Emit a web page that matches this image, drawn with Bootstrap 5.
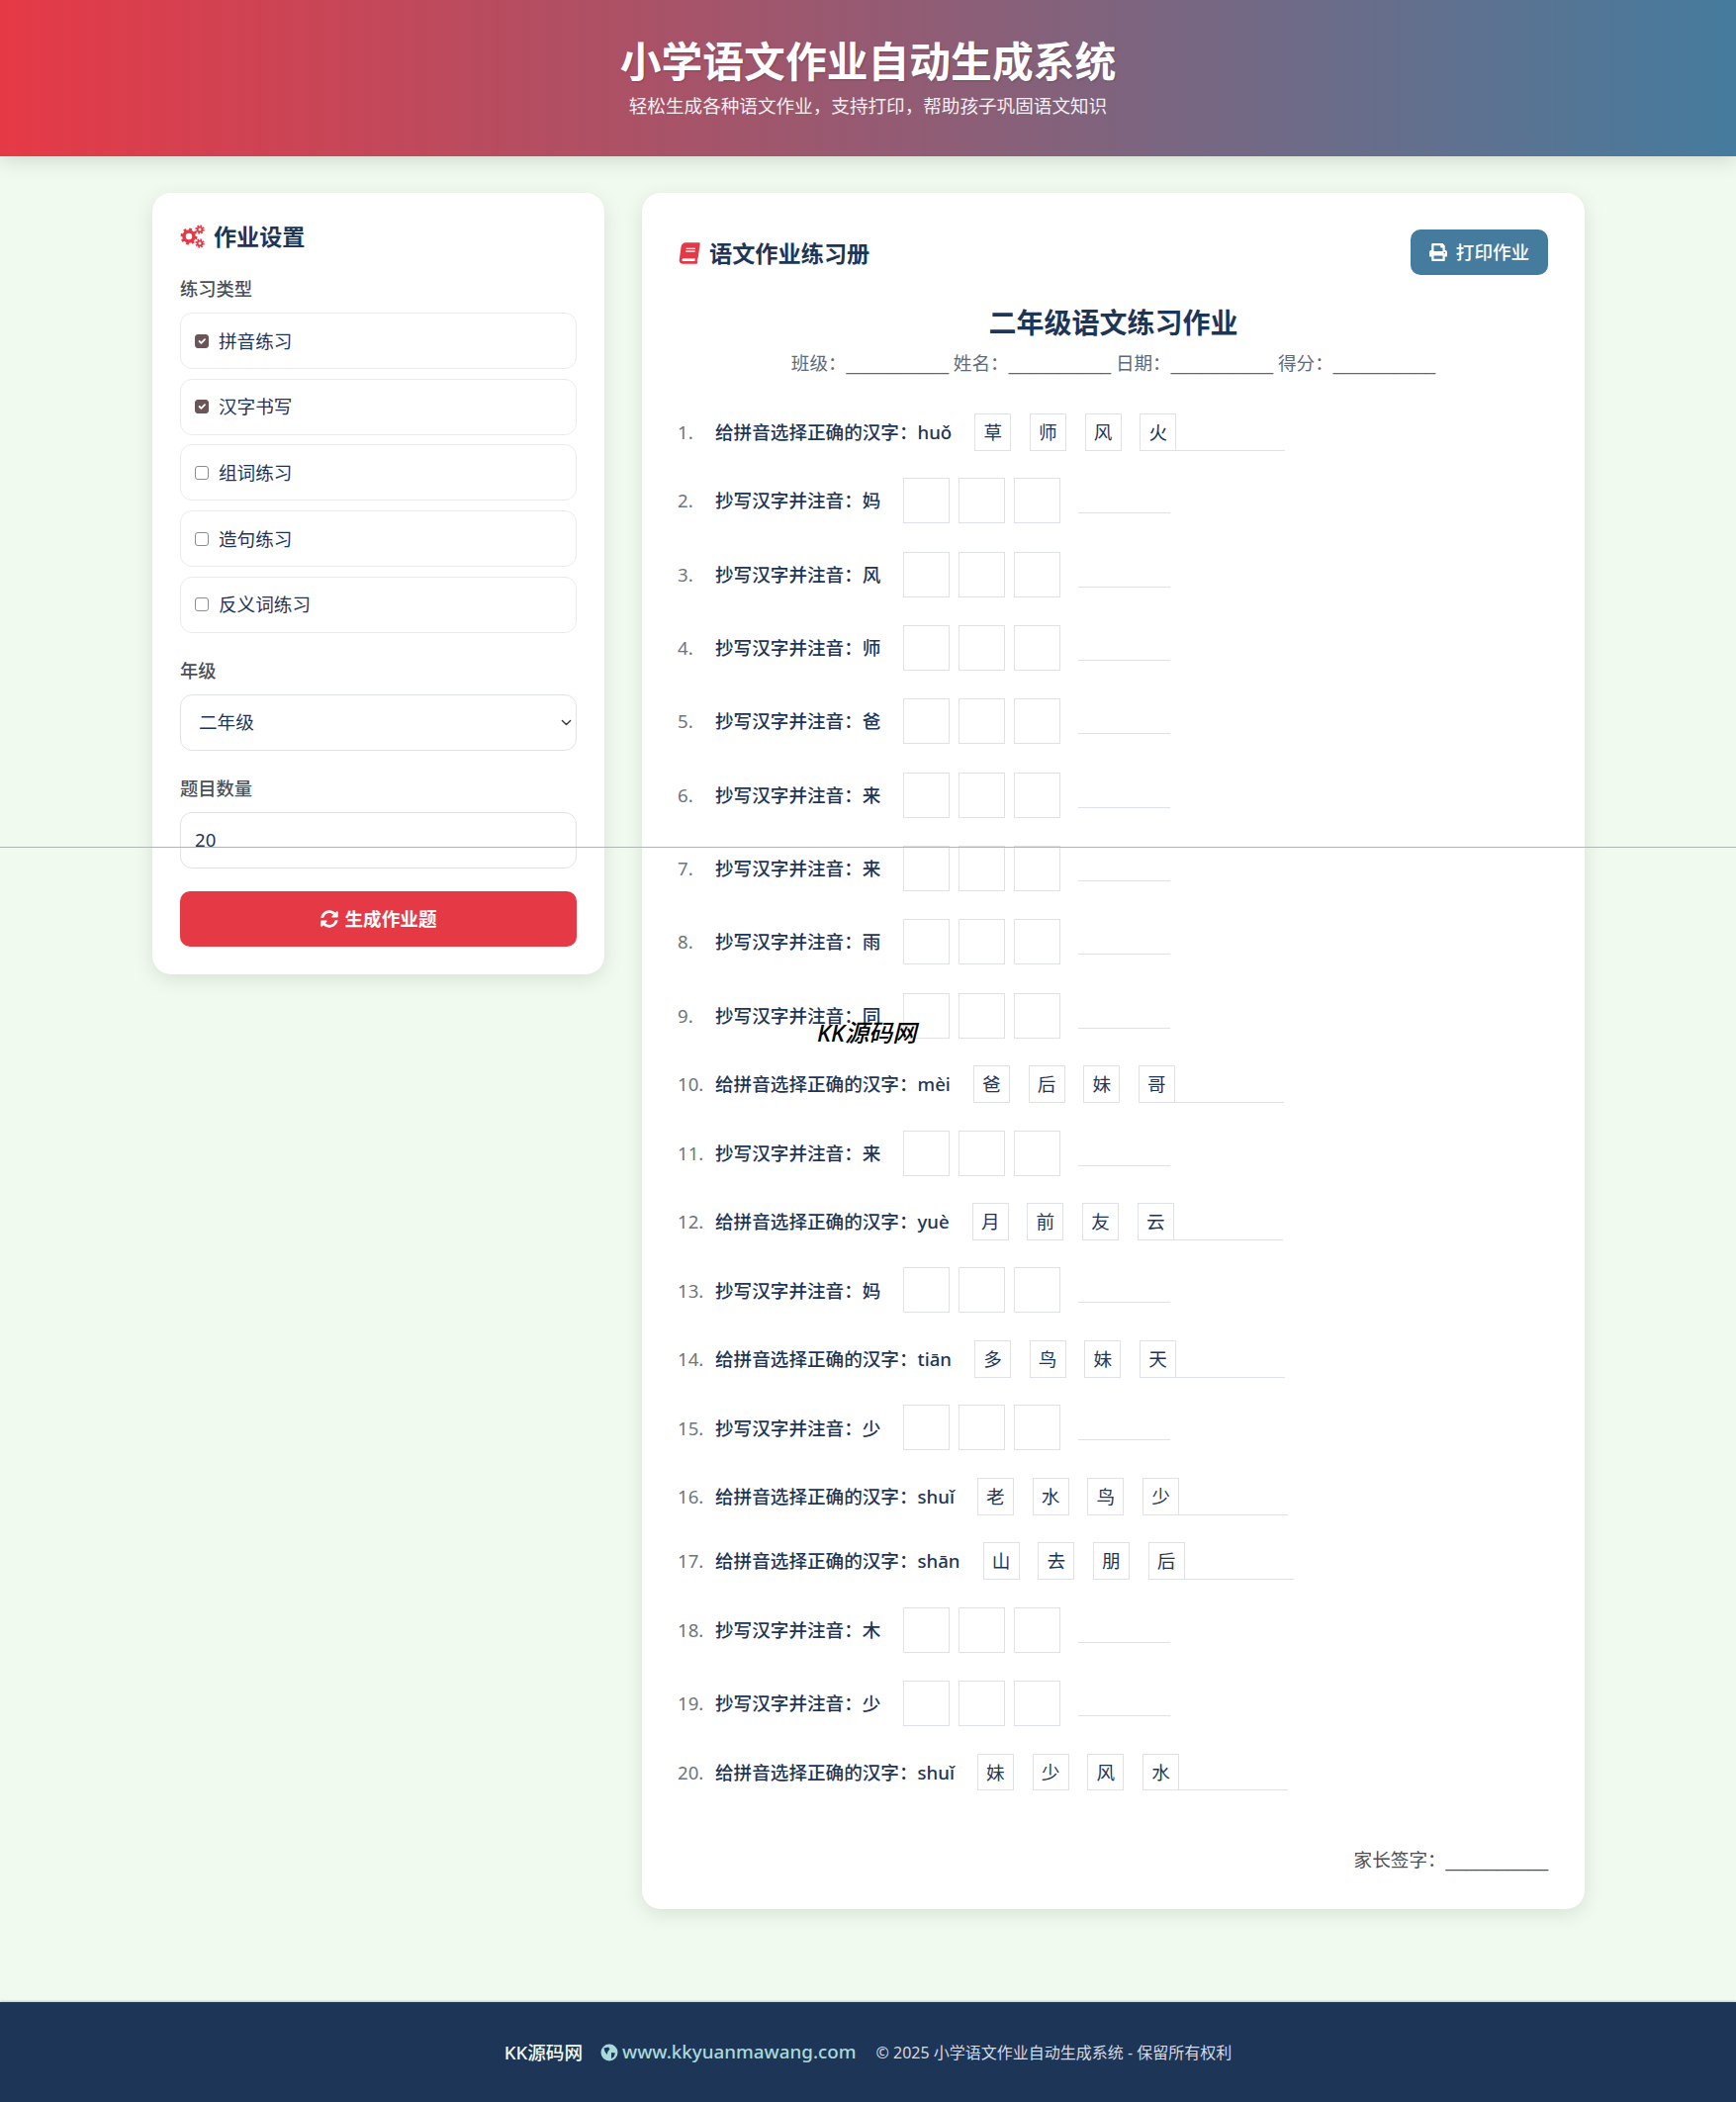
<!DOCTYPE html>
<html lang="zh-CN">
<head>
<meta charset="utf-8">
<title>小学语文作业自动生成系统</title>
<link rel="stylesheet" href="https://cdn.jsdelivr.net/npm/bootstrap@5.3.0/dist/css/bootstrap.min.css">
<style>
:root{--ink:#1d3557;--red:#e63946;--blue:#457b9d;}
html,body{margin:0;}
body{background:#f1faee;color:var(--ink);font-family:"Noto Sans","Noto Sans CJK SC",sans-serif;font-size:18.6px;position:relative;height:2125px;overflow:hidden;}
.top-band{height:158px;background:linear-gradient(90deg,#e63946,#457b9d);box-shadow:0 4px 20px rgba(0,0,0,.14);color:#fff;text-align:center;padding-top:33px;position:relative;}
.top-band h1{font-size:41.8px;font-weight:700;line-height:57px;margin:0;text-shadow:1px 1px 2px rgba(0,0,0,.2);}
.top-band p{font-size:18.6px;line-height:26px;margin:4px 0 0;opacity:.9;}
.page-body{width:1448px;margin:37px 0 0 154px;gap:38px;align-items:flex-start;}
.panel{background:#fff;border:0;border-radius:19px;box-shadow:0 5px 20px rgba(0,0,0,.1);}
.panel-side{width:457px;padding:27px 28px 28px;}
.panel-main{width:953px;height:1735px;padding:37px;}
.side-title{font-size:23.1px;font-weight:700;line-height:34px;margin:0 0 23px;display:flex;align-items:center;gap:8px;}
.field-label{font-size:18.3px;font-weight:500;color:#495057;line-height:26px;margin:0 0 11px;display:block;}
.opt-row{height:57px;border:1px solid #e9ecef;border-radius:12px;margin:0 0 9.7px;padding:0 0 0 14px;display:flex;align-items:center;gap:10px;color:var(--ink);min-height:0;font-size:18.6px;flex:none;}
.opt-row .form-check-input{float:none;margin:0;width:14px;height:14px;border:1.5px solid #8b8f94;border-radius:3px;flex:none;opacity:1;}
.opt-row .form-check-input:checked{background-color:#6b5558;border-color:#6b5558;}
.group-gap-a{margin-top:15.4px;}
.group-gap-b{margin-top:25px;}
.side-input{height:57px;border:1px solid #dfe3e8;border-radius:12px;font-size:18.6px;color:var(--ink);box-shadow:none;flex:none;}
select.side-input{padding-left:18px;background-position:right 3px center;background-size:13px 11px;}
input.side-input{padding-left:14px;padding-top:4px;}
.gen-btn{height:56px;margin-top:23px;background:var(--red);border:0;border-radius:10px;color:#fff;font-size:18.6px;font-weight:700;display:flex;align-items:center;justify-content:center;gap:7px;width:100%;flex:none;}
.gen-btn:hover{background:var(--red);color:#fff;}
.main-title{font-size:23.2px;font-weight:700;line-height:34px;margin:0;display:flex;align-items:center;gap:9px;padding-top:7px;}
.print-btn{background:var(--blue);color:#fff;border:0;border-radius:10px;width:139px;height:46px;font-size:18.6px;font-weight:500;display:flex;align-items:center;justify-content:center;gap:9px;padding:0;}
.print-btn:hover{background:var(--blue);color:#fff;}
.sheet-title{font-size:28px;font-weight:700;line-height:38px;text-align:center;margin:29px 0 0;}
.sheet-meta{color:#5d6a7a;font-size:18.6px;line-height:26px;text-align:center;margin:9px 0 0;}
.blank{font-family:"Liberation Sans",sans-serif;}
.work-list{list-style:none;margin:0;padding:0;position:absolute;top:223.75px;left:36px;right:36px;}
.work-item{display:flex;align-items:center;margin:0 0 28.3px;font-size:18.6px;font-weight:500;}
.work-item:has(.choice-cell){margin-top:-.65px;margin-bottom:27.65px;}
.work-item:has(.choice-cell) + .work-item:has(.choice-cell){margin-top:.65px;}
.item-no{width:38px;color:#6c757d;font-weight:400;flex:none;}
.choice-cell{width:37px;height:37.7px;border:1px solid #dee2e6;display:flex;align-items:center;justify-content:center;font-weight:400;margin-right:18.7px;flex:none;}
.choice-first{margin-left:23px;}
.choice-last{margin-right:0;}
.answer-line{width:110px;height:37.7px;border-bottom:1px solid #dee2e6;flex:none;}
.write-cell{width:47px;height:46px;border:1px solid #dee2e6;margin-right:9px;flex:none;}
.write-first{margin-left:23px;}
.write-line{width:93px;height:26px;border-bottom:1px solid #dee2e6;margin-left:9px;flex:none;}
.sign-line{position:absolute;right:37px;top:1672px;color:#495057;line-height:26px;}
.main-wrap{position:relative;}
.page-foot{position:absolute;left:0;right:0;top:2024px;height:101px;background:#1d3557;color:#d5dbe3;display:flex;align-items:center;justify-content:center;box-shadow:0 -1px 2px rgba(0,0,0,.2);}
.foot-brand{color:#f1faee;font-weight:500;font-size:18.6px;margin-right:18px;}
.foot-link{color:#a8dadc;font-weight:500;font-size:18.8px;display:flex;align-items:center;gap:4px;margin-right:20px;text-decoration:none;}
.foot-copy{font-size:16px;}
.scan-line{position:absolute;left:0;right:0;top:856px;height:1px;background:#b1b5b4;}
.wm{position:absolute;left:826px;top:1027px;font-style:italic;font-size:24.2px;color:#000;line-height:34px;font-weight:500;}
</style>
</head>
<body>
<header class="top-band">
  <h1>小学语文作业自动生成系统</h1>
  <p>轻松生成各种语文作业，支持打印，帮助孩子巩固语文知识</p>
</header>
<main class="d-flex page-body">
  <aside class="card panel panel-side">
    <h3 class="side-title">
      <svg width="26" height="24" viewBox="0 0 26 24" fill="none" stroke="#e63946"><circle cx="9" cy="12" r="5" stroke-width="3.6"/><circle cx="9" cy="12" r="7.2" stroke-width="2.6" stroke-dasharray="2.8 2.85"/><circle cx="20" cy="5" r="2.4" stroke-width="1.9"/><circle cx="20" cy="5" r="3.9" stroke-width="1.6" stroke-dasharray="1.6 1.46"/><circle cx="20" cy="19" r="2.4" stroke-width="1.9"/><circle cx="20" cy="19" r="3.9" stroke-width="1.6" stroke-dasharray="1.6 1.46"/></svg>
      作业设置
    </h3>
    <label class="field-label">练习类型</label>
    <label class="form-check opt-row"><input class="form-check-input" type="checkbox" checked disabled>拼音练习</label>
    <label class="form-check opt-row"><input class="form-check-input" type="checkbox" checked disabled>汉字书写</label>
    <label class="form-check opt-row"><input class="form-check-input" type="checkbox" disabled>组词练习</label>
    <label class="form-check opt-row"><input class="form-check-input" type="checkbox" disabled>造句练习</label>
    <label class="form-check opt-row"><input class="form-check-input" type="checkbox" disabled>反义词练习</label>
    <label class="field-label group-gap-a">年级</label>
    <select class="form-select side-input"><option>二年级</option></select>
    <label class="field-label group-gap-b">题目数量</label>
    <input class="form-control side-input" type="number" value="20">
    <button class="btn gen-btn" type="button">
      <svg width="18" height="18" viewBox="0 0 512 512" fill="#fff"><path d="M370.72 133.28C339.458 104.008 298.888 87.962 255.848 88c-77.458.068-144.328 53.178-162.791 126.85-1.344 5.363-6.122 9.15-11.651 9.15H24.103c-7.498 0-13.194-6.807-11.807-14.176C33.933 94.924 134.813 8 256 8c66.448 0 126.791 26.136 171.315 68.685L463.03 40.97C478.149 25.851 504 36.559 504 57.941V192c0 13.255-10.745 24-24 24H345.941c-21.382 0-32.09-25.851-16.971-40.971l41.75-41.749zM32 296h134.059c21.382 0 32.09 25.851 16.971 40.971l-41.75 41.75c31.262 29.273 71.835 45.319 114.876 45.28 77.418-.07 144.315-53.144 162.787-126.849 1.344-5.363 6.122-9.15 11.651-9.15h57.304c7.498 0 13.193 6.807 11.807 14.176C478.067 417.076 377.187 504 256 504c-66.448 0-126.791-26.136-171.315-68.685L48.97 471.03C33.851 486.149 8 475.441 8 454.059V320c0-13.255 10.745-24 24-24z"/></svg>
      生成作业题
    </button>
  </aside>
  <section class="card panel panel-main main-wrap">
    <div class="d-flex justify-content-between align-items-start">
      <h3 class="main-title">
        <svg width="22" height="22" viewBox="-40 0 528 512" fill="#e63946"><g transform="skewX(-8) translate(36 0)"><path d="M448 360V24c0-13.3-10.7-24-24-24H96C43 0 0 43 0 96v320c0 53 43 96 96 96h328c13.3 0 24-10.7 24-24v-16c0-7.5-3.5-14.3-8.9-18.7-4.2-15.4-4.2-59.3 0-74.7 5.4-4.3 8.9-11.1 8.9-18.6zM128 134c0-3.3 2.7-6 6-6h212c3.3 0 6 2.7 6 6v20c0 3.3-2.7 6-6 6H134c-3.3 0-6-2.7-6-6v-20zm0 64c0-3.3 2.7-6 6-6h212c3.3 0 6 2.7 6 6v20c0 3.3-2.7 6-6 6H134c-3.3 0-6-2.7-6-6v-20zm253.4 250H96c-17.7 0-32-14.3-32-32 0-17.6 14.4-32 32-32h285.4c-1.9 17.1-1.9 46.9 0 64z"/></g></svg>
        语文作业练习册
      </h3>
      <button class="btn print-btn" type="button">
        <svg width="18" height="18" viewBox="0 0 512 512" fill="#fff"><path d="M448 192V77.25c0-8.49-3.37-16.62-9.37-22.63L393.37 9.37c-6-6-14.14-9.37-22.63-9.37H96C78.33 0 64 14.33 64 32v160c-35.35 0-64 28.65-64 64v112c0 8.84 7.16 16 16 16h48v96c0 17.67 14.33 32 32 32h320c17.67 0 32-14.33 32-32v-96h48c8.84 0 16-7.16 16-16V256c0-35.35-28.65-64-64-64zm-64 256H128v-96h256v96zm0-224H128V64h192v48c0 8.84 7.16 16 16 16h48v96zm48 72c-13.25 0-24-10.75-24-24 0-13.26 10.75-24 24-24s24 10.74 24 24c0 13.25-10.75 24-24 24z"/></svg>
        打印作业
      </button>
    </div>
    <h2 class="sheet-title">二年级语文练习作业</h2>
    <p class="sheet-meta">班级：<span class="blank">__________</span> 姓名：<span class="blank">__________</span> 日期：<span class="blank">__________</span> 得分：<span class="blank">__________</span></p>
    <ol class="work-list">
      <li class="work-item"><span class="item-no">1.</span>给拼音选择正确的汉字：huǒ<span class="choice-cell choice-first">草</span><span class="choice-cell">师</span><span class="choice-cell">风</span><span class="choice-cell choice-last">火</span><span class="answer-line"></span></li>
      <li class="work-item"><span class="item-no">2.</span>抄写汉字并注音：妈<span class="write-cell write-first"></span><span class="write-cell"></span><span class="write-cell"></span><span class="write-line"></span></li>
      <li class="work-item"><span class="item-no">3.</span>抄写汉字并注音：风<span class="write-cell write-first"></span><span class="write-cell"></span><span class="write-cell"></span><span class="write-line"></span></li>
      <li class="work-item"><span class="item-no">4.</span>抄写汉字并注音：师<span class="write-cell write-first"></span><span class="write-cell"></span><span class="write-cell"></span><span class="write-line"></span></li>
      <li class="work-item"><span class="item-no">5.</span>抄写汉字并注音：爸<span class="write-cell write-first"></span><span class="write-cell"></span><span class="write-cell"></span><span class="write-line"></span></li>
      <li class="work-item"><span class="item-no">6.</span>抄写汉字并注音：来<span class="write-cell write-first"></span><span class="write-cell"></span><span class="write-cell"></span><span class="write-line"></span></li>
      <li class="work-item"><span class="item-no">7.</span>抄写汉字并注音：来<span class="write-cell write-first"></span><span class="write-cell"></span><span class="write-cell"></span><span class="write-line"></span></li>
      <li class="work-item"><span class="item-no">8.</span>抄写汉字并注音：雨<span class="write-cell write-first"></span><span class="write-cell"></span><span class="write-cell"></span><span class="write-line"></span></li>
      <li class="work-item"><span class="item-no">9.</span>抄写汉字并注音：同<span class="write-cell write-first"></span><span class="write-cell"></span><span class="write-cell"></span><span class="write-line"></span></li>
      <li class="work-item"><span class="item-no">10.</span>给拼音选择正确的汉字：mèi<span class="choice-cell choice-first">爸</span><span class="choice-cell">后</span><span class="choice-cell">妹</span><span class="choice-cell choice-last">哥</span><span class="answer-line"></span></li>
      <li class="work-item"><span class="item-no">11.</span>抄写汉字并注音：来<span class="write-cell write-first"></span><span class="write-cell"></span><span class="write-cell"></span><span class="write-line"></span></li>
      <li class="work-item"><span class="item-no">12.</span>给拼音选择正确的汉字：yuè<span class="choice-cell choice-first">月</span><span class="choice-cell">前</span><span class="choice-cell">友</span><span class="choice-cell choice-last">云</span><span class="answer-line"></span></li>
      <li class="work-item"><span class="item-no">13.</span>抄写汉字并注音：妈<span class="write-cell write-first"></span><span class="write-cell"></span><span class="write-cell"></span><span class="write-line"></span></li>
      <li class="work-item"><span class="item-no">14.</span>给拼音选择正确的汉字：tiān<span class="choice-cell choice-first">多</span><span class="choice-cell">鸟</span><span class="choice-cell">妹</span><span class="choice-cell choice-last">天</span><span class="answer-line"></span></li>
      <li class="work-item"><span class="item-no">15.</span>抄写汉字并注音：少<span class="write-cell write-first"></span><span class="write-cell"></span><span class="write-cell"></span><span class="write-line"></span></li>
      <li class="work-item"><span class="item-no">16.</span>给拼音选择正确的汉字：shuǐ<span class="choice-cell choice-first">老</span><span class="choice-cell">水</span><span class="choice-cell">鸟</span><span class="choice-cell choice-last">少</span><span class="answer-line"></span></li>
      <li class="work-item"><span class="item-no">17.</span>给拼音选择正确的汉字：shān<span class="choice-cell choice-first">山</span><span class="choice-cell">去</span><span class="choice-cell">朋</span><span class="choice-cell choice-last">后</span><span class="answer-line"></span></li>
      <li class="work-item"><span class="item-no">18.</span>抄写汉字并注音：木<span class="write-cell write-first"></span><span class="write-cell"></span><span class="write-cell"></span><span class="write-line"></span></li>
      <li class="work-item"><span class="item-no">19.</span>抄写汉字并注音：少<span class="write-cell write-first"></span><span class="write-cell"></span><span class="write-cell"></span><span class="write-line"></span></li>
      <li class="work-item"><span class="item-no">20.</span>给拼音选择正确的汉字：shuǐ<span class="choice-cell choice-first">妹</span><span class="choice-cell">少</span><span class="choice-cell">风</span><span class="choice-cell choice-last">水</span><span class="answer-line"></span></li>
    </ol>
    <div class="sign-line">家长签字：<span class="blank">__________</span></div>
  </section>
</main>
<footer class="page-foot">
  <span class="foot-brand">KK源码网</span>
  <a class="foot-link" href="#">
    <svg width="18" height="18" viewBox="0 0 18 18"><circle cx="9" cy="9" r="8.5" fill="#a8dadc"/><path d="M3.5 4.5 8 3.5l1.5 2-2 2.5-1 3-2-3zM11 9l4 .5-1.5 4-2.5 1.5z" fill="#1d3557"/></svg>
    www.kkyuanmawang.com
  </a>
  <span class="foot-copy">© 2025 小学语文作业自动生成系统 - 保留所有权利</span>
</footer>
<div class="scan-line"></div>
<div class="wm">KK源码网</div>
</body>
</html>
